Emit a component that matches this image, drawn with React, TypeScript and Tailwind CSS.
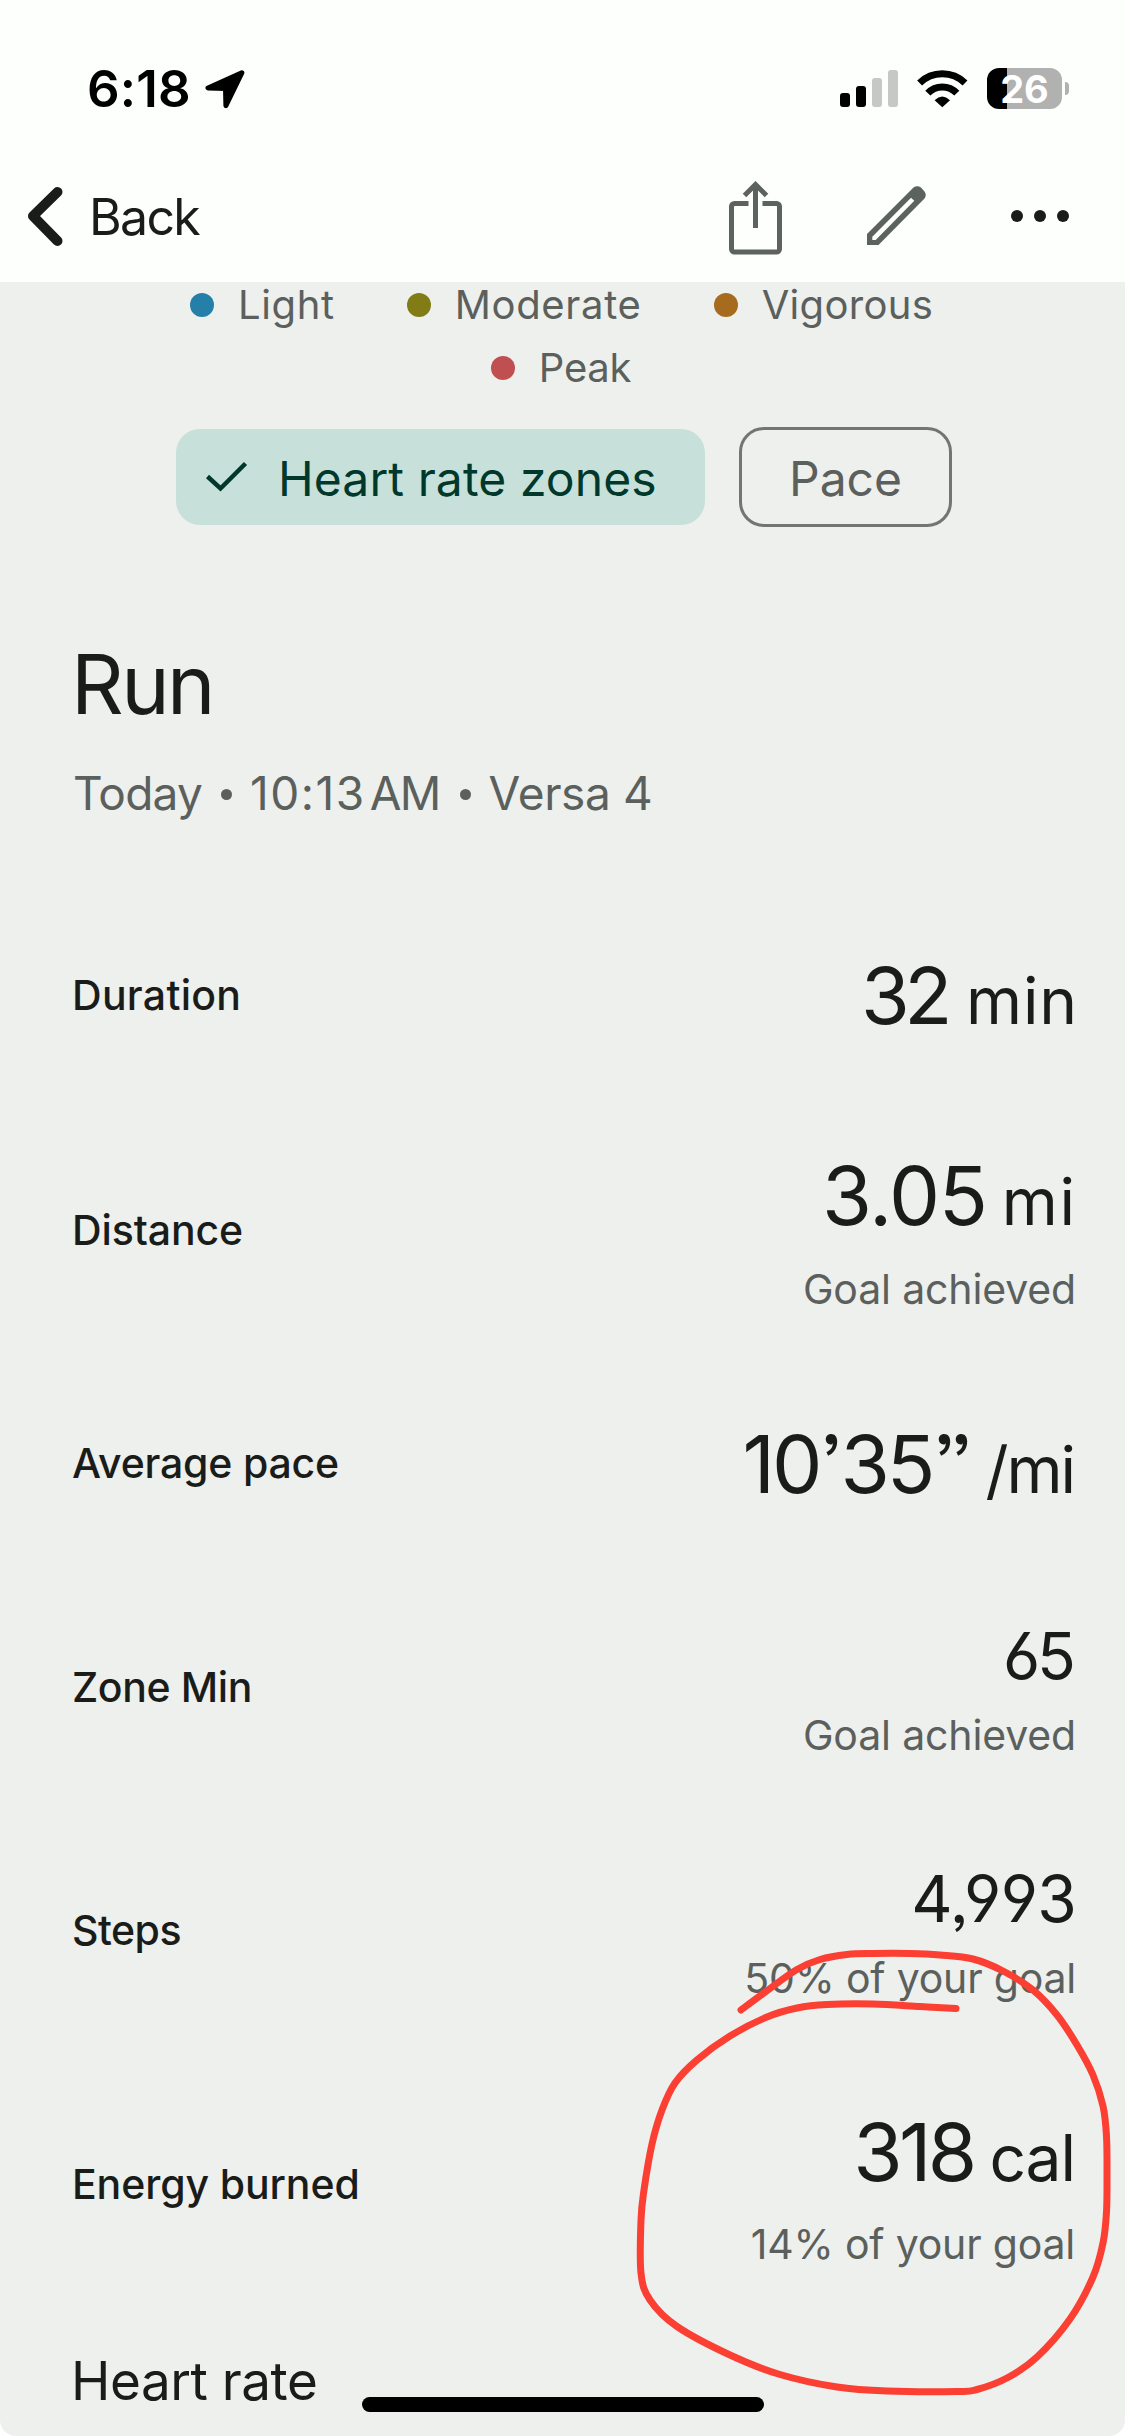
import React from 'react';

type Stat = {
  label: string;
  labelClass: string;
  rowClass: string;
  value: string;
  valueClass: string;
  unit?: string;
  unitClass?: string;
  note?: string;
  noteClass?: string;
};

const stats: Stat[] = [
  {
    label: 'Duration', labelClass: 'tracking-[0.3px] -ml-px', rowClass: 'h-[200px]',
    value: '32', valueClass: 'text-[79px] leading-[119px] tracking-[-5.5px]',
    unit: 'min', unitClass: 'ml-[19px] tracking-[0.9px] -mr-px',
  },
  {
    label: 'Distance', labelClass: 'tracking-[-0.1px] -ml-px', rowClass: 'h-[269px]',
    value: '3.05', valueClass: 'text-[81px] leading-[119px] tracking-[-1.3px]',
    unit: 'mi', unitClass: 'ml-[15px] tracking-[1.9px]',
    note: 'Goal achieved', noteClass: 'h-[66px] leading-[66px] tracking-[-0.15px] mr-px',
  },
  {
    label: 'Average pace', labelClass: 'tracking-[-0.2px] -ml-px', rowClass: 'h-[198px]',
    value: '10’35”', valueClass: 'text-[80px] leading-[119px] tracking-[-3px]',
    unit: '/mi', unitClass: 'ml-[15px] tracking-[-2px] mr-[3px]',
  },
  {
    label: 'Zone Min', labelClass: 'tracking-[-0.4px] -ml-px', rowClass: 'h-[250px]',
    value: '65', valueClass: 'text-[64px] leading-[95px] tracking-[-3px] mr-[4px]',
    note: 'Goal achieved', noteClass: 'h-[63px] leading-[65px] tracking-[-0.15px] mr-px',
  },
  {
    label: 'Steps', labelClass: 'tracking-[-0.5px] -ml-px', rowClass: 'h-[236px]',
    value: '4,993', valueClass: 'text-[64px] leading-[95px] tracking-[-0.7px] mr-px',
    note: '50% of your goal', noteClass: 'h-[64px] leading-[64px] tracking-[-0.2px] mr-px',
  },
  {
    label: 'Energy burned', labelClass: 'tracking-[-0.1px] -ml-px', rowClass: 'h-[272px]',
    value: '318', valueClass: 'text-[80px] leading-[119px] tracking-[-3.8px]',
    unit: 'cal', unitClass: 'ml-[16px] tracking-[-1px] mr-[2px]',
    note: '14% of your goal', noteClass: 'h-[66px] leading-[66px] tracking-[-0.2px] mr-[2px]',
  },
];

// Hand-drawn marker stroke, in page pixels.
const marker: [number, number][] = [
  [741, 2010], [770, 1988.5], [797, 1969.5], [820, 1959.5], [847, 1954.5], [873, 1953.5], [910, 1953.5],
  [940, 1955], [973, 1959], [1003, 1971], [1033, 1990], [1057, 2015], [1077, 2045], [1093, 2075],
  [1103, 2106], [1106.5, 2136], [1107, 2175], [1106.5, 2212], [1103, 2243], [1093, 2277], [1070, 2319],
  [1037, 2357], [1007, 2378], [977, 2389.5], [957, 2391.5], [887, 2391], [837, 2387], [780, 2374.5],
  [730, 2355], [677, 2326.5], [650, 2300], [641, 2273], [641, 2220], [644, 2190], [652, 2144],
  [662, 2110], [675, 2083], [697, 2060], [730, 2036], [767, 2017], [797, 2008], [827, 2004.5],
  [873, 2004], [920, 2006.5], [956, 2008.5],
];

// Catmull-Rom spline through the points, written as cubic Béziers.
function smooth(p: [number, number][]) {
  let d = `M${p[0][0]} ${p[0][1]}`;
  for (let i = 0; i < p.length - 1; i++) {
    const a = p[Math.max(i - 1, 0)];
    const b = p[i];
    const c = p[i + 1];
    const e = p[Math.min(i + 2, p.length - 1)];
    d += `C${b[0] + (c[0] - a[0]) / 6} ${b[1] + (c[1] - a[1]) / 6} ${c[0] - (e[0] - b[0]) / 6} ${c[1] - (e[1] - b[1]) / 6} ${c[0]} ${c[1]}`;
  }
  return d;
}

function StatusBar() {
  return (
    <div className="flex h-[106px] items-start justify-between pl-[87px] pr-[56px] pt-[68px] text-black">
      <div className="flex items-start">
        <span className="-mt-[10px] text-[51px] font-semibold leading-[61px] tracking-[0.2px]">6:18</span>
        <svg className="ml-[14px] mt-[2px]" width="40" height="40" viewBox="0 0 40 40">
          <path d="M36.8 2.8 3 18l17.5.5.4 17.2z" fill="#000" stroke="#000" strokeWidth="5" strokeLinejoin="round" />
        </svg>
      </div>
      <div className="flex items-start">
        <div className="mt-[2px] flex h-[37px] items-end gap-[6px]">
          <div className="h-[14px] w-[10px] rounded-[3px] bg-black" />
          <div className="h-[21px] w-[10px] rounded-[3px] bg-black" />
          <div className="h-[29px] w-[10px] rounded-[3px] bg-[#c7c8c6]" />
          <div className="h-[37px] w-[10px] rounded-[3px] bg-[#c7c8c6]" />
        </div>
        <svg className="ml-[19px] mt-[2px]" width="51" height="38" viewBox="0 0 51 38" fill="none" stroke="#000" strokeWidth="7">
          <path d="M2.6 12.9a32.6 32.6 0 0 1 45.4 0" />
          <path d="M10.8 23.2a20 20 0 0 1 29 0" />
          <path d="M25.3 37.2 17.6 30.2Q25.3 22.8 33 30.2Z" fill="#000" stroke="none" />
        </svg>
        <div className="ml-[19px] flex h-[41px] items-center">
          <div className="flex h-[41px] w-[75px] items-center justify-center rounded-[12px] bg-[linear-gradient(90deg,#000_20px,#b0b1b0_20px)] text-[38px] font-bold leading-[48px] text-white">
            26
          </div>
          <div className="ml-[3px] h-[13px] w-[4px] rounded-r-full bg-[#b0b1b0]" />
        </div>
      </div>
    </div>
  );
}

function NavBar() {
  return (
    <div className="flex h-[176px] items-start pl-[27px] pr-[56px] pt-[74px]">
      <svg className="mt-[5px]" width="36" height="62" viewBox="0 0 36 62" fill="none" stroke="#1a1c1a" strokeWidth="10" strokeLinecap="round" strokeLinejoin="round">
        <path d="M30.5 7 6 31l24.5 25" />
      </svg>
      <span className="ml-[26px] text-[50px] leading-[74px] tracking-[-1.7px] text-[#1a1c1a]">Back</span>
      <div className="flex-1" />
      <svg className="mt-px" width="54" height="74" viewBox="0 0 54 74" fill="none" stroke="#5c635f" strokeWidth="5">
        <path d="M19.5 22.5H5.5a3 3 0 0 0-3 3V68a3 3 0 0 0 3 3h42a3 3 0 0 0 3-3V25.500a3 3 0 0 0-3-3h-14" />
        <path d="M26.500 4v43M15.500 14.500l11-11 11 11" />
      </svg>
      <svg className="ml-[84px] mt-[6px]" width="60" height="60" viewBox="0 0 60 60" fill="#5c635f" fillRule="evenodd">
        <path d="M0 59V48L46.500 1.500Q50-1 54 1.500L57.500 5.500Q60 9 57.500 12.500L11.500 59ZM5.300 50.700V54H8.700L47.300 14.700 44 11.700Z" />
      </svg>
      <div className="ml-[84px] mt-[30px] flex gap-[11px]">
        <div className="size-[12px] rounded-full bg-[#1a1c1a]" />
        <div className="size-[12px] rounded-full bg-[#1a1c1a]" />
        <div className="size-[12px] rounded-full bg-[#1a1c1a]" />
      </div>
    </div>
  );
}

function Legend({ dot, text, name }: { dot: string; text: string; name: string }) {
  return (
    <div className="flex items-center gap-6">
      <div className={`size-6 rounded-full ${dot}`} />
      <span className={`text-[40px] leading-[46px] text-[#5b605d] ${text}`}>{name}</span>
    </div>
  );
}

function StatRow({ s }: { s: Stat }) {
  return (
    <div className={`flex items-center justify-between ${s.rowClass}`}>
      <span className={`text-[41px] font-medium leading-[60px] ${s.labelClass}`}>{s.label}</span>
      <div className="flex flex-col items-end">
        <div className="flex items-baseline [font-feature-settings:'cv03','cv04','ss03']">
          <span className={s.valueClass}>{s.value}</span>
          {s.unit && <span className={`text-[64px] leading-[64px] ${s.unitClass}`}>{s.unit}</span>}
        </div>
        {s.note && <span className={`text-[41px] text-[#5b605d] ${s.noteClass}`}>{s.note}</span>}
      </div>
    </div>
  );
}

export default function App() {
  return (
    <div className="h-[2436px] w-[1125px] bg-white">
      <div className="relative flex h-full w-full flex-col overflow-hidden rounded-b-[16px] bg-[#eef0ed] font-['Inter',sans-serif] text-[#1a1c1a]">
        <header className="h-[282px] shrink-0 bg-[#fcfffb]">
          <StatusBar />
          <NavBar />
        </header>

        <div className="flex h-[46px] shrink-0 items-center justify-center gap-[72px] pr-[2px]">
          <Legend dot="bg-[#2480a9]" text="tracking-[0.63px]" name="Light" />
          <Legend dot="bg-[#827c16]" text="tracking-[0.69px]" name="Moderate" />
          <Legend dot="bg-[#a66b1e]" text="tracking-[0.31px]" name="Vigorous" />
        </div>
        <div className="flex h-[80px] shrink-0 items-center justify-center pr-[3px]">
          <Legend dot="bg-[#c04f52]" text="tracking-[-0.3px]" name="Peak" />
        </div>

        <div className="mt-[19px] flex h-[100px] shrink-0 items-center gap-[34px] pl-[176px] text-[48px] leading-[60px]">
          <div className="flex h-[96px] w-[529px] items-center rounded-[24px] bg-[#c7e0da] pl-[30px] text-[#00382b]">
            <svg width="42" height="32" viewBox="0 0 42 32" fill="none" stroke="#00382b" strokeWidth="4.500">
              <path d="M1.500 15.500 14.500 27.500 39.500 2.500" />
            </svg>
            <span className="ml-[30px] mt-[3px] tracking-[0.1px]">Heart rate zones</span>
          </div>
          <div className="flex h-[100px] w-[213px] items-center justify-center rounded-[25px] border-[3px] border-[#717673] pt-[3px] text-[#5b605d]">
            Pace
          </div>
        </div>

        <h1 className="mt-[98px] h-[119px] shrink-0 pl-[71px] text-[82px] leading-[120px] tracking-[-2.6px]">Run</h1>
        <div className="flex h-[97px] shrink-0 items-center pl-[73px] text-[46px] leading-[60px] text-[#5b605d]">
          <span className="tracking-[-0.75px]">Today</span>
          <span className="ml-[19px] mt-[3px] size-[11px] rounded-full bg-[#5b605d]" />
          <span className="ml-[18px] tracking-[1.5px]">10:13</span>
          <span className="ml-[4px] tracking-[-1.7px]">AM</span>
          <span className="ml-[20px] mt-[3px] size-[11px] rounded-full bg-[#5b605d]" />
          <span className="ml-[18px] tracking-[-0.35px]">Versa 4</span>
        </div>

        <main className="mt-[54px] flex shrink-0 flex-col pl-[73px] pr-[48px]">
          {stats.map((s) => (
            <StatRow key={s.label} s={s} />
          ))}
        </main>
        <h2 className="h-[116px] overflow-hidden pl-[71px] text-[53px] leading-[122px] tracking-[-0.46px]">Heart rate</h2>

        <div className="absolute bottom-[24px] left-[362px] h-[15px] w-[402px] rounded-full bg-black" />
        <svg className="absolute inset-0" width="1125" height="2436" viewBox="0 0 1125 2436" fill="none">
          <path d={smooth(marker)} stroke="#fb3f33" strokeWidth="7" strokeLinecap="round" strokeLinejoin="round" />
        </svg>
      </div>
    </div>
  );
}
